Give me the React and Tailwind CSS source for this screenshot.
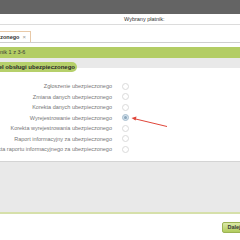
const rows = [
  'Zgłoszenie ubezpieczonego',
  'Zmiana danych ubezpieczonego',
  'Korekta danych ubezpieczonego',
  'Wyrejestrowanie ubezpieczonego',
  'Korekta wyrejestrowania ubezpieczonego',
  'Raport informacyjny za ubezpieczonego',
  'Korekta raportu informacyjnego za ubezpieczonego',
]

const Radio = ({ checked }) => (
  <span
    className={
      checked
        ? 'block w-[7px] h-[7px] rounded-full border border-[#a9bfd0] bg-[#d3e2ed] flex items-center justify-center'
        : 'block w-[7px] h-[7px] rounded-full border border-[#dadada] bg-white'
    }
  >
    {checked && <span className="block w-[3px] h-[3px] rounded-full bg-[#8aa6bb]"></span>}
  </span>
)

const App = () => {
  return (
    <div className="relative w-[240px] h-[240px] overflow-hidden bg-white font-['Liberation_Sans',sans-serif] text-[#555]">
      <div className="h-[14px] bg-[#646464]"></div>

      <div className="h-[11px] flex items-center pl-[124px] border-b border-[#dcdcdc] text-[5.5px] text-[#333]">
        Wybrany płatnik:
      </div>

      <div className="h-[18px] flex items-end border-b border-[#cfcfcf]">
        <div className="w-[31px] h-[11px] flex items-center justify-end gap-[3px] pr-[4px] bg-white border-t border-r border-[#e8c9a8] overflow-hidden">
          <span className="whitespace-nowrap font-bold text-[5.5px] text-[#333]">czonego</span>
          <span className="text-[6px] text-[#999] leading-none">×</span>
        </div>
      </div>

      <div className="h-[4px]"></div>

      <div className="h-[11px] flex items-center bg-[#b3cd64] text-[5.5px] text-[#3a3a3a] whitespace-nowrap">
        nik 1 z 3-6
      </div>

      <div className="h-[156px] bg-[#e9e9e9] pt-[4px] border-b-2 border-[#d6e0aa]">
        <div className="relative z-10 w-[77px] h-[10px] -mb-[4px] flex items-center justify-end pr-[2px] rounded-r-[5px] bg-[#b6d06b] overflow-hidden">
          <span className="whitespace-nowrap font-bold text-[6px] text-[#2a2a2a]">Panel obsługi ubezpieczonego</span>
        </div>
        <div className="h-[94px] bg-white border-b border-[#d4d4d4] pt-[13px]">
          {rows.map((r, i) => (
            <div key={r} className="h-[10.5px] flex items-center">
              <div className="w-[112px] flex justify-end">
                <span className="whitespace-nowrap text-[5.5px] text-[#777]">{r}</span>
              </div>
              <div className="ml-[10px]">
                <Radio checked={i === 3} />
              </div>
            </div>
          ))}
        </div>
      </div>

      <div className="flex justify-end pt-[8px] -mr-[6px]">
        <button className="h-[11px] w-[24px] rounded-[2px] border border-[#9cb354] bg-gradient-to-b from-[#dbe9a6] to-[#b1cb5c] text-[5.5px] font-bold text-[#3a3a3a]">
          Dalej
        </button>
      </div>

      <svg className="absolute left-0 top-0" width="240" height="240" viewBox="0 0 240 240">
        <line x1="167" y1="126.5" x2="134" y2="118.6" stroke="#e0463a" strokeWidth="1" />
        <polygon points="131.5,118 136.5,116.6 135.6,120.6" fill="#e0463a" />
      </svg>
    </div>
  )
}

export default App
